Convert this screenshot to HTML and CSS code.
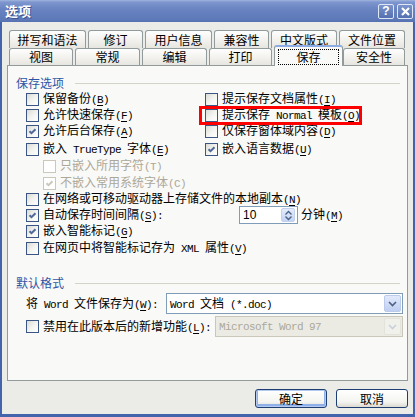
FILE: index.html
```html
<!DOCTYPE html>
<html lang="zh-CN">
<head>
  <meta charset="UTF-8">
  <title>选项</title>
  <link rel="stylesheet" href="styles.css">
</head>
<body>

  <div class="window">
    <div class="titlebar">
      <span class="title">选项</span>
      <div class="caption">
        <span class="cap-btn">?</span>
        <span class="cap-btn">
          <svg width="9" height="9" viewBox="0 0 9 9"><path d="M1 1l7 7M8 1l-7 7" stroke="#fff" stroke-width="2.2"/></svg>
        </span>
      </div>
    </div>

    <div class="client">
      <div class="tabs">
        <div class="tab-row back">
          <div class="tab">拼写和语法</div>
          <div class="tab">修订</div>
          <div class="tab">用户信息</div>
          <div class="tab">兼容性</div>
          <div class="tab">中文版式</div>
          <div class="tab">文件位置</div>
        </div>
        <div class="tab-row front">
          <div class="tab">视图</div>
          <div class="tab">常规</div>
          <div class="tab">编辑</div>
          <div class="tab">打印</div>
          <div class="tab active"><span class="focus">保存</span></div>
          <div class="tab">安全性</div>
        </div>
      </div>

      <div class="panel">
        <div class="group-title">保存选项</div>
        <div class="opts">
          <div class="pair">
            <div class="opt"><span class="cb"></span><span>保留备份<span class="en">(<u>B</u>)</span></span></div>
            <div class="opt"><span class="cb"></span><span>提示保存文档属性<span class="en">(<u>I</u>)</span></span></div>
          </div>
          <div class="pair">
            <div class="opt"><span class="cb"></span><span>允许快速保存<span class="en">(<u>F</u>)</span></span></div>
            <div class="opt marked"><span class="cb"></span><span>提示保存<span class="en"> Normal </span>模板<span class="en">(<u>O</u>)</span></span></div>
          </div>
          <div class="pair">
            <div class="opt"><span class="cb"><svg viewBox="0 0 11 11"><path d="M2.5 5.2l2 2 4-4"/></svg></span><span>允许后台保存<span class="en">(<u>A</u>)</span></span></div>
            <div class="opt"><span class="cb"></span><span>仅保存窗体域内容<span class="en">(<u>D</u>)</span></span></div>
          </div>
          <div class="pair mt2">
            <div class="opt"><span class="cb"></span><span>嵌入<span class="en"> TrueType </span>字体<span class="en">(<u>E</u>)</span></span></div>
            <div class="opt"><span class="cb"><svg viewBox="0 0 11 11"><path d="M2.5 5.2l2 2 4-4"/></svg></span><span>嵌入语言数据<span class="en">(<u>U</u>)</span></span></div>
          </div>
          <div class="opt sub dis mt1"><span class="cb"></span><span>只嵌入所用字符<span class="en">(T)</span></span></div>
          <div class="opt sub dis mt1"><span class="cb"><svg viewBox="0 0 11 11"><path d="M2.5 5.2l2 2 4-4"/></svg></span><span>不嵌入常用系统字体<span class="en">(C)</span></span></div>
          <div class="opt"><span class="cb"></span><span>在网络或可移动驱动器上存储文件的本地副本<span class="en">(<u>N</u>)</span></span></div>
          <div class="opt">
            <span class="cb"><svg viewBox="0 0 11 11"><path d="M2.5 5.2l2 2 4-4"/></svg></span>
            <span class="spin-label">自动保存时间间隔<span class="en">(<u>S</u>):</span></span>
            <span class="spin">
              <span class="num">10</span>
              <span class="spin-btn">
                <svg width="9" height="11" viewBox="0 0 9 11"><path d="M1.5 4.5l3-3 3 3M1.5 6.5l3 3 3-3" fill="none" stroke="#4d6185" stroke-width="1.4"/></svg>
              </span>
            </span>
            <span class="unit">分钟<span class="en">(<u>M</u>)</span></span>
          </div>
          <div class="opt"><span class="cb"><svg viewBox="0 0 11 11"><path d="M2.5 5.2l2 2 4-4"/></svg></span><span>嵌入智能标记<span class="en">(<u>G</u>)</span></span></div>
          <div class="opt mt1"><span class="cb"></span><span>在网页中将智能标记存为<span class="en"> XML </span>属性<span class="en">(<u>V</u>)</span></span></div>
        </div>

        <div class="group-title second">默认格式</div>
        <div class="opts">
          <div class="field mt2">
            <span>将<span class="en"> Word </span>文件保存为<span class="en">(<u>W</u>):</span></span>
            <div class="combo wide">
              <span><span class="en">Word </span>文档<span class="en"> (*.doc)</span></span>
              <span class="combo-btn">
                <svg width="9" height="6" viewBox="0 0 9 6"><path d="M1 1l3.5 3.5L8 1" fill="none" stroke="#4d6185" stroke-width="1.6"/></svg>
              </span>
            </div>
          </div>
          <div class="field mt2">
            <span class="cb"></span>
            <span class="field-label">禁用在此版本后的新增功能<span class="en">(<u>L</u>):</span></span>
            <div class="combo narrow off">
              <span class="en">Microsoft Word 97</span>
              <span class="combo-btn">
                <svg width="9" height="6" viewBox="0 0 9 6"><path d="M1 1l3.5 3.5L8 1" fill="none" stroke="#c9d0dc" stroke-width="1.6"/></svg>
              </span>
            </div>
          </div>
        </div>
      </div>

      <div class="actions">
        <button class="btn default">确定</button>
        <button class="btn">取消</button>
      </div>
    </div>
  </div>

</body>
</html>
```

FILE: styles.css
```css
*,
*::before,
*::after {
  box-sizing: border-box;
}

body {
  margin: 0;
  font-family: "Noto Sans CJK SC", "Liberation Sans", sans-serif;
  font-size: 12px;
  line-height: 16px;
  color: #000;
  background: #fff;
}

.window {
  width: 415px;
  height: 417px;
  display: flex;
  flex-direction: column;
}

/* title bar */
.titlebar {
  height: 22px;
  flex: none;
  display: flex;
  align-items: center;
  padding: 0 2px 0 5px;
  background: linear-gradient(#a2b5dd 0, #7e97cf 2px, #6a84c2 9px, #5d78b7 20px, #5470b0 22px);
}

.title {
  color: #fff;
  font-weight: bold;
  font-size: 13px;
  text-shadow: 1px 1px 0 #3e5590;
}

.caption {
  margin-left: auto;
  display: flex;
  gap: 3px;
}

.cap-btn {
  width: 16px;
  height: 15px;
  display: flex;
  align-items: center;
  justify-content: center;
  border: 1px solid #dfe6f4;
  border-radius: 2px;
  background: linear-gradient(#7b94cc, #5570b0);
  color: #fff;
  font: bold 12px "Liberation Sans", sans-serif;
}

/* client area */
.client {
  flex: 1;
  background: #ebebe8;
  border: solid #4363ad;
  border-width: 0 2px 3px 2px;
  padding: 8px 5px 0 5px;
}

.tabs {
  height: 35px;
  padding-left: 2px;
  display: flex;
  flex-direction: column;
}

.tab-row {
  display: flex;
  gap: 2px;
}

.tab-row.back {
  height: 18px;
}

.tab-row.front {
  height: 17px;
  align-items: flex-end;
}

.tab {
  height: 100%;
  display: flex;
  align-items: center;
  justify-content: center;
  border: 1px solid #919b9c;
  border-bottom: none;
  border-radius: 3px 3px 0 0;
  background: linear-gradient(#fefefe, #f1f0ec 60%, #e6e5df);
}

.back .tab:nth-child(1) { width: 77px; }
.back .tab:nth-child(2) { width: 55px; }
.back .tab:nth-child(3) { width: 67px; }
.back .tab:nth-child(4) { width: 55px; }
.back .tab:nth-child(5) { width: 66px; }
.back .tab:nth-child(6) { width: 66px; }

.front .tab:nth-child(1) { width: 64px; }
.front .tab:nth-child(2) { width: 65px; }
.front .tab:nth-child(3) { width: 65px; }
.front .tab:nth-child(4) { width: 63px; }
.front .tab:nth-child(6) { width: 62px; }

.front .tab.active {
  width: 69px;
  height: 21px;
  margin: 0 -2px -1px 0;
  position: relative;
  z-index: 1;
  border-top: 2px solid #8cabe2;
  background: #f9f9f7;
}

.focus {
  width: 61px;
  height: 16px;
  display: flex;
  align-items: center;
  justify-content: center;
  border: 1px dotted #000;
}

/* panel */
.panel {
  height: 316px;
  border: 1px solid #919b9c;
  background: #f9f9f7;
  padding: 9px 4px 0 8px;
}

.group-title {
  height: 16px;
  display: flex;
  align-items: center;
  gap: 11px;
  margin-right: 3px;
  color: #2d55a6;
}

.group-title::after {
  content: "";
  flex: 1;
  height: 1px;
  background: #d3d3c8;
}

.group-title.second {
  margin-top: 19px;
}

.opts {
  padding-left: 10px;
}

.pair {
  display: flex;
}

.pair .opt:first-child {
  width: 179px;
}

.opt {
  height: 16px;
  display: flex;
  align-items: center;
  gap: 4px;
  white-space: nowrap;
}

.opt.sub {
  padding-left: 17px;
}

.mt1 { margin-top: 1px; }
.mt2 { margin-top: 2px; }

.en {
  font-family: "Liberation Mono", monospace;
  font-size: 11px;
  letter-spacing: -0.6px;
}

u {
  text-decoration-thickness: 1px;
  text-underline-offset: 2px;
}

/* check box */
.cb {
  flex: none;
  width: 13px;
  height: 13px;
  border: 1px solid #3b5584;
  background: linear-gradient(135deg, #dcdcd6, #f4f4f1 55%, #fff);
  display: flex;
}

.cb svg {
  width: 11px;
  height: 11px;
}

.cb path {
  fill: none;
  stroke: #4f6896;
  stroke-width: 2;
}

.dis {
  color: #aca899;
}

.dis .cb {
  border-color: #cac8bb;
  background: #fff;
}

.dis .cb path {
  stroke: #cac8bb;
}

.marked {
  position: relative;
}

.marked::after {
  content: "";
  position: absolute;
  left: -6px;
  top: -1px;
  width: 163px;
  height: 19px;
  border: 3px solid #f00;
}

/* spin box */
.spin-label {
  width: 192px;
}

.spin {
  width: 59px;
  height: 18px;
  margin: -1px 0;
  display: flex;
  align-items: center;
  border: 1px solid #7f9db9;
  background: #fff;
  padding: 0 2px 0 3px;
}

.num {
  font: 12px "Liberation Sans", sans-serif;
}

.spin-btn {
  margin-left: auto;
  width: 14px;
  height: 14px;
  display: flex;
  align-items: center;
  justify-content: center;
  border: 1px solid #c2d1ee;
  border-radius: 2px;
  background: linear-gradient(#e4ecfb, #c3d3f3);
}

.unit {
  margin-left: -1px;
}

/* default format */
.field {
  height: 21px;
  display: flex;
  align-items: center;
  gap: 4px;
  white-space: nowrap;
}

.combo {
  margin-left: auto;
  height: 21px;
  display: flex;
  align-items: center;
  border: 1px solid #7f9db9;
  background: #fff;
  padding: 0 1px 0 3px;
}

.combo.wide {
  width: 237px;
}

.combo.narrow {
  width: 189px;
}

.combo-btn {
  margin-left: auto;
  width: 17px;
  height: 17px;
  display: flex;
  align-items: center;
  justify-content: center;
  border: 1px solid #bccbeb;
  border-radius: 2px;
  background: linear-gradient(#e2eafb, #bfcff2);
}

.combo.off {
  border-color: #c9c7ba;
  background: #ebebe4;
  color: #aca899;
}

.combo.off .combo-btn {
  border-color: #e3e3dc;
  background: #f1f1ec;
}

/* buttons */
.actions {
  display: flex;
  justify-content: flex-end;
  gap: 9px;
  margin-top: 8px;
}

.btn {
  width: 72px;
  height: 19px;
  padding: 0;
  font: inherit;
  line-height: 16px;
  color: #000;
  border: 1px solid #1f3f72;
  border-radius: 3px;
  background: linear-gradient(#fff, #f4f4f0 70%, #dcd9cf);
}

.btn.default {
  box-shadow: inset 0 0 0 1px #b4c9f0, inset 0 -1px 0 2px #8fb0e8;
}
```
